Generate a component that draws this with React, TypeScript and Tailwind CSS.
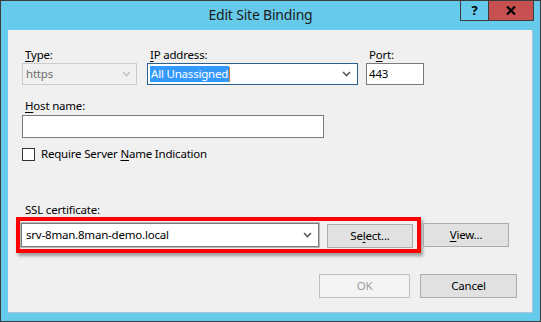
const Chevron = ({ color }: { color: string }) => (
  <svg width="9" height="6" viewBox="0 0 9 6" className="shrink-0">
    <path d="M1 1l3.5 3.5L8 1" stroke={color} strokeWidth="1.6" fill="none" />
  </svg>
)

const Label = ({ pre, u, post }: { pre?: string; u?: string; post?: string }) => (
  <div className="h-4 leading-4 pl-[3px] text-[11.5px] tracking-[-0.2px] text-black">
    {pre}
    {u && <span className="underline underline-offset-[2px]">{u}</span>}
    {post}
  </div>
)

const Button = ({ children, className = '' }: { children: React.ReactNode; className?: string }) => (
  <div
    className={`h-[24px] flex items-center justify-center bg-[#e1e1e1] border border-[#adadad] text-[11.5px] tracking-[-0.2px] text-black ${className}`}
  >
    {children}
  </div>
)

const App = () => {
  return (
    <div
      className="w-[541px] h-[322px] bg-[#66cbea] border border-[#3c3c3c] flex flex-col select-none"
      style={{ fontFamily: '"Noto Sans", "Open Sans", sans-serif' }}
    >
      {/* title bar */}
      <div className="h-[29px] grid grid-cols-[1fr_auto_1fr] shrink-0">
        <div />
        <div className="pt-[4px] mr-[20px] text-[14px] tracking-[-0.2px] leading-5 text-[#1b1b1b]">Edit Site Binding</div>
        <div className="flex justify-end items-start pr-[6px] -mt-px">
          <div className="w-[28px] h-[21px] border border-[#3c3c3c] border-r-0 bg-[#66cbea] flex items-center justify-center text-[13px] font-bold text-black leading-none">
            ?
          </div>
          <div className="w-[46px] h-[21px] border border-[#3c3c3c] bg-[#c75050] flex items-center justify-center">
            <svg width="10" height="9" viewBox="0 0 10 9">
              <path d="M1 0.5l8 8M9 0.5l-8 8" stroke="#000" strokeWidth="2.2" />
            </svg>
          </div>
        </div>
      </div>

      {/* client area */}
      <div className="flex-1 mx-[7px] mb-[8px] bg-[#f0f0f0] border-r border-b border-[#a7c6d8] flex flex-col text-[11.5px] tracking-[-0.2px]">
        <div className="pl-[14px] pt-[17px] flex items-end">
          <div className="w-[115px]">
            <Label u="T" post="ype:" />
            <div className="h-[22px] border border-[#cccccc] bg-[#f0f0f0] flex items-center pl-[3px] pr-[5px] text-[#6d6d6d]">
              <span className="flex-1">https</span>
              <Chevron color="#c4c4c4" />
            </div>
          </div>
          <div className="w-[211px] ml-[10px]">
            <Label u="I" post="P address:" />
            <div className="h-[22px] border border-[#2d5f8b] bg-white flex items-center pl-[2px] pr-[6px]">
              <span className="flex-1 flex items-center">
                <span className="bg-[#3399ff] text-white px-[1px] leading-[16px]">All Unassigned</span>
                <span className="w-px h-[15px] bg-[#d17a2a]" />
              </span>
              <Chevron color="#5a5a5a" />
            </div>
          </div>
          <div className="w-[58px] ml-[8px]">
            <Label pre="P" u="o" post="rt:" />
            <div className="h-[22px] border border-[#7a7a7a] bg-white flex items-center pl-[2px] text-black">
              443
            </div>
          </div>
        </div>

        <div className="pl-[14px] mt-[13px]">
          <Label u="H" post="ost name:" />
          <div className="w-[302px] h-[23px] mt-[1px] border border-[#7a7a7a] bg-white" />
        </div>

        <div className="pl-[14px] mt-[8px] flex items-center">
          <div className="w-[13px] h-[13px] border border-[#333333] bg-white" />
          <span className="ml-[6px] leading-4 text-black">
            Require Server <span className="underline underline-offset-[2px]">N</span>ame Indication
          </span>
        </div>

        <div className="pl-[14px] mt-[40px]">
          <Label pre="SSL certificate:" />
        </div>

        <div className="pl-[8px] -mt-[1px] flex items-center">
          <div className="w-[405px] border-[4px] border-[#ff0000] bg-[#f0f0f0] flex items-center py-[1px] pl-px pr-[4px] shadow-[2px_3px_3px_rgba(0,0,0,0.35)]">
            <div className="w-[298px] h-[24px] border border-[#7a7a7a] outline outline-1 outline-[#b9b9b9] bg-white flex items-center pl-[4px] pr-[6px] text-black">
              <span className="flex-1">srv-8man.8man-demo.local</span>
              <Chevron color="#5a5a5a" />
            </div>
            <Button className="w-[86px] ml-[8px] mt-[2px]">
              Se<span className="underline underline-offset-[2px]">l</span>ect...
            </Button>
          </div>
          <Button className="w-[86px] ml-[2px]">
            <span className="underline underline-offset-[2px]">V</span>iew...
          </Button>
        </div>

        <div className="mt-auto mb-[14px] pr-[15px] flex justify-end gap-[10px]">
          <div className="w-[91px] h-[24px] flex items-center justify-center bg-[#f4f4f4] border border-[#bfbfbf] text-[#a0a0a0]">
            OK
          </div>
          <Button className="w-[97px] border-[#707070]">Cancel</Button>
        </div>
      </div>
    </div>
  )
}

export default App
